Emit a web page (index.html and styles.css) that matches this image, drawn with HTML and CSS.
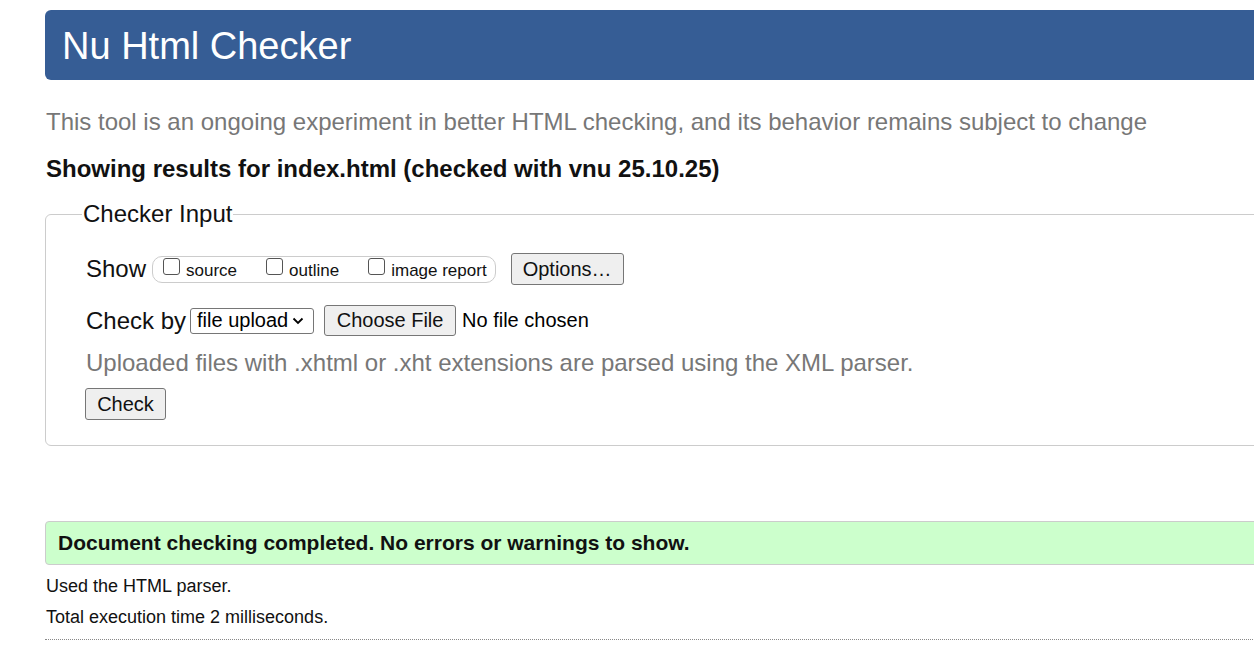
FILE: index.html
```html
<!DOCTYPE html>
<html lang="en">
<head>
<meta charset="utf-8">
<title>Nu Html Checker</title>
<link rel="stylesheet" href="styles.css">
</head>
<body>
<div class="page">
  <h1 class="title">Nu Html Checker</h1>
  <p class="tagline">This tool is an ongoing experiment in better HTML checking, and its behavior remains subject to change</p>
  <p class="showing">Showing results for index.html (checked with vnu 25.10.25)</p>
  <fieldset class="input">
    <legend>Checker Input</legend>
    <div class="row">
      <span class="lbl">Show</span>
      <span class="group">
        <label class="opt"><span class="cb"></span>source</label>
        <label class="opt"><span class="cb"></span>outline</label>
        <label class="opt"><span class="cb"></span>image report</label>
      </span>
      <span class="btn opts">Options…</span>
    </div>
    <div class="row row2">
      <span class="lbl">Check by</span>
      <span class="select">file upload<svg width="12" height="8" viewBox="0 0 12 8"><path d="M1.5 1.5 L6 6 L10.5 1.5" fill="none" stroke="#000" stroke-width="1.8"/></svg></span>
      <span class="btn file">Choose File</span>
      <span class="nofile">No file chosen</span>
    </div>
    <p class="note">Uploaded files with .xhtml or .xht extensions are parsed using the XML parser.</p>
    <span class="btn check">Check</span>
  </fieldset>
  <p class="success">Document checking completed. No errors or warnings to show.</p>
  <p class="stat first">Used the HTML parser.</p>
  <p class="stat">Total execution time 2 milliseconds.</p>
  <hr class="dots">
</div>
</body>
</html>
```
FILE: styles.css
```css
html, body { margin: 0; padding: 0; background: #fff; overflow: hidden; }
body { font-family: "Liberation Sans", Arial, sans-serif; color: #000; }
.page { width: 1400px; padding: 10px 0 0 45px; }
.title {
  margin: 0; height: 70px; box-sizing: border-box;
  background: #365d95; color: #fff; font-weight: normal;
  font-size: 38px; line-height: 72px; padding-left: 17px;
  border-radius: 6px 0 0 6px;
}
.tagline { margin: 27px 0 0 1px; font-size: 24px; color: #777; line-height: 30px; }
.showing { margin: 17px 0 0 1px; font-size: 24px; font-weight: bold; color: #111; line-height: 30px; }
.input {
  margin: 16px 0 0 0; border: 1px solid #ccc; border-radius: 6px;
  padding: 0 0 25px 40px; width: 1400px; box-sizing: border-box;
}
.input legend { font-size: 24px; padding: 0 1px; margin-left: -4px; color: #111; line-height: 28px; }
.row { display: flex; align-items: center; margin-top: 25px; }
.lbl { font-size: 24px; color: #111; margin-right: 6px; }
.row2 .lbl { margin-right: 5px; }
.group {
  display: inline-flex; align-items: center; height: 27px; box-sizing: border-box;
  border: 1px solid #ccc; border-radius: 10px; padding: 0 8px 0 10px; gap: 29px;
}
.opt { display: inline-flex; align-items: center; font-size: 17px; color: #111; position: relative; top: 2px; }
.cb { width: 17px; height: 17px; box-sizing: border-box; border: 1px solid #555; border-radius: 3px; margin-right: 6px; position: relative; top: -5px; background: #fff; }
.btn {
  display: inline-flex; align-items: center; justify-content: center; box-sizing: border-box;
  background: #efefef; border: 1px solid #767676; border-radius: 3px; font-size: 20px; color: #111;
}
.opts { margin-left: 15px; width: 113px; height: 32px; }
.row2 { margin-top: 20px; }
.select {
  display: inline-flex; align-items: center; gap: 4px; box-sizing: border-box;
  height: 26px; width: 124px; border: 1px solid #767676; border-radius: 3px;
  font-size: 20px; padding: 0 6px 0 6px; margin-left: -1px;
}
.file { margin-left: 10px; width: 132px; height: 31px; }
.nofile { font-size: 20px; margin-left: 6px; }
.note { margin: 12px 0 0 0; font-size: 24px; color: #777; line-height: 30px; }
.check { margin-top: 10px; width: 81px; height: 32px; margin-left: -1px; }
.success {
  margin: 75px 0 0 0; height: 44px; box-sizing: border-box; background: #ccffcc;
  border: 1px solid #ccc; border-radius: 4px 0 0 4px; font-size: 21px; font-weight: bold;
  line-height: 42px; padding-left: 12px; color: #111;
}
.stat { margin: 10px 0 0 1px; font-size: 18px; line-height: 21px; color: #111; }
.stat.first { margin-top: 11px; }
.dots { margin: 11px 0 0 0; border: 0; border-top: 1px dotted #888; height: 0; }
```
